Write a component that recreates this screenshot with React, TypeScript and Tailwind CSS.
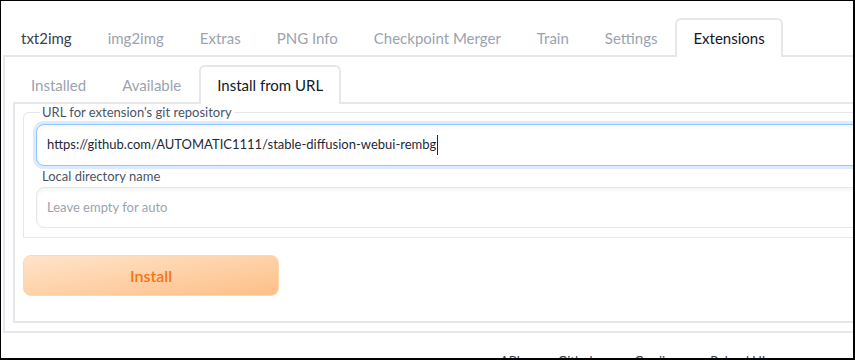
const topTabs = ["txt2img", "img2img", "Extras", "PNG Info", "Checkpoint Merger", "Train", "Settings", "Extensions"];
const innerTabs = ["Installed", "Available", "Install from URL"];

function Tab({ label, active, dark }: { label: string; active?: boolean; dark?: boolean }) {
  return (
    <div
      className={
        "h-[39px] -mb-[2px] px-4 flex items-center whitespace-nowrap border-2 border-b-0 rounded-t-md text-[15px] " +
        (active
          ? "border-[#e5e7eb] bg-white text-[#111827]"
          : dark
          ? "border-transparent text-[#374151]"
          : "border-transparent text-[#9ca3af]")
      }
    >
      {label}
    </div>
  );
}

export default function App() {
  return (
    <div
      className="w-[855px] h-[360px] overflow-hidden bg-white border-t border-l border-r-2 border-b-2 border-black"
      style={{ fontFamily: "Lato, 'Liberation Sans', sans-serif" }}
    >
      <div className="w-[1100px] pl-[2px] pt-[17px]">
        {/* top tabs */}
        <div className="flex border-b-2 border-[#e5e7eb]">
          {topTabs.map((t) => (
            <Tab key={t} label={t} active={t === "Extensions"} dark={t === "txt2img"} />
          ))}
        </div>

        {/* Extensions panel */}
        <div className="border-2 border-t-0 border-[#e5e7eb] p-2">
          <div className="flex border-b-2 border-[#e5e7eb]">
            {innerTabs.map((t) => (
              <Tab key={t} label={t} active={t === "Install from URL"} />
            ))}
          </div>

          <div className="border-2 border-t-0 border-[#e5e7eb] px-2 pb-2">
            <fieldset className="border border-[#e5e7eb] rounded-tl-md pl-3 pb-[9px]">
              <legend className="ml-[4px] px-[2px] text-[13px] leading-4 text-[#4b5563]">
                URL for extension's git repository
              </legend>
              <div className="mt-[4px] h-[42px] flex items-center px-[10px] rounded-lg border border-[#93c5fd] ring-[3px] ring-[#dbeafe] bg-white shadow-inner text-[13px] text-[#1f2937]">
                https://github.com/AUTOMATIC1111/stable-diffusion-webui-rembg
                <span className="ml-px h-[20px] border-l border-[#1f2937]" />
              </div>
              <div className="mt-0 pl-[6px] text-[13px] leading-5 text-[#4b5563]">Local directory name</div>
              <div className="mt-px h-[41px] flex items-center px-[10px] rounded-lg border border-[#e5e7eb] bg-white shadow-inner text-[13px] text-[#9ca3af]">
                Leave empty for auto
              </div>
            </fieldset>

            <div className="mt-[17px] mb-[17px]">
              <button className="w-[256px] h-[41px] rounded-lg border border-[#fed7aa] bg-gradient-to-br from-[#fee4ca] to-[#fdbf86] text-[16px] font-semibold text-[#f97316]">
                Install
              </button>
            </div>
          </div>
        </div>

        {/* footer */}
        <div className="mt-[18px] pl-[497px] flex items-center text-[13px] leading-5 text-[#374151]">
          <span>API</span>
          <span className="mx-[15px]">•</span>
          <span>Github</span>
          <span className="mx-[15px]">•</span>
          <span>Gradio</span>
          <span className="mx-[15px]">•</span>
          <span>Reload UI</span>
        </div>
      </div>
    </div>
  );
}
